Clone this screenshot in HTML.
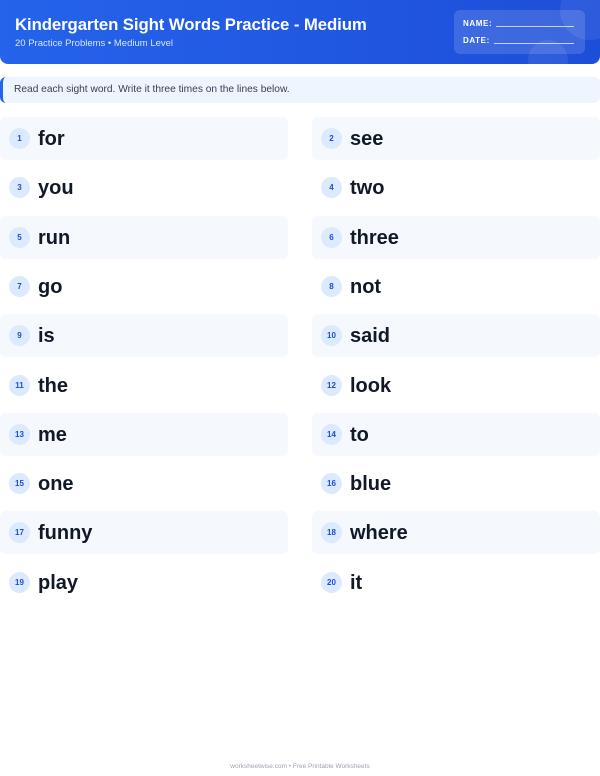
<!DOCTYPE html>
<html><head><meta charset="utf-8"><style>
*{margin:0;padding:0;box-sizing:border-box}
body{width:600px;height:776px;background:#fff;font-family:"Liberation Sans",Arial,sans-serif;position:relative;overflow:hidden}
.hdr{position:absolute;left:0;top:0;width:600px;height:64px;background:linear-gradient(90deg,#2563eb,#1d4ed8);border-radius:0 0 8px 8px;overflow:hidden;color:#fff}
.hdr h1{position:absolute;left:15px;top:15px;font-size:16.8px;font-weight:bold;letter-spacing:-0.1px}
.hdr .sub{position:absolute;left:15px;top:38px;font-size:9.5px;color:#dbe4ff}
.c1{position:absolute;right:-20px;top:-20px;width:60px;height:60px;border-radius:50%;background:rgba(255,255,255,.08)}
.c2{position:absolute;left:528px;top:40px;width:40px;height:40px;border-radius:50%;background:rgba(255,255,255,.08)}
.nb{position:absolute;left:454px;top:10px;width:131px;height:44px;background:rgba(255,255,255,.14);border-radius:6px;font-size:8px;font-weight:bold;letter-spacing:.6px}
.nb div{position:absolute;left:9px}
.nb span{display:inline-block;border-bottom:1px solid rgba(255,255,255,.7);margin-left:4px;vertical-align:-1px}
.ins{position:absolute;left:0;top:77px;width:600px;height:26px;background:#eef5ff;border-left:3px solid #2563eb;border-radius:6px;font-size:10.2px;color:#374151;padding:7px 0 0 11px}
.row{position:absolute;height:43px;border-radius:6px;width:288px}
.row.s{background:#f5f8fd}
.n{position:absolute;left:9px;top:11px;width:21px;height:21px;border-radius:50%;background:#dbeafe;color:#1d4ed8;font-size:8px;font-weight:bold;text-align:center;line-height:21px}
.w{position:absolute;left:38px;top:11px;font-size:20px;font-weight:bold;color:#111827}
.ft{position:absolute;top:763px;width:600px;text-align:center;font-size:6.5px;color:#9ca3af}
</style></head><body>
<div class="hdr"><div class="c1"></div><div class="c2"></div>
<h1>Kindergarten Sight Words Practice - Medium</h1>
<div class="sub">20 Practice Problems • Medium Level</div>
<div class="nb"><div style="top:9px">NAME:<span style="width:78px"></span></div><div style="top:26px">DATE:<span style="width:80px"></span></div></div>
</div>
<div class="ins">Read each sight word. Write it three times on the lines below.</div>
<div id="g"></div>
<script>
var w=["for","see","you","two","run","three","go","not","is","said","the","look","me","to","one","blue","funny","where","play","it"];
var h="";
for(var i=0;i<20;i++){var r=Math.floor(i/2),c=i%2;var t=117+r*49.3;
h+='<div class="row'+(r%2==0?' s':'')+'" style="top:'+t+'px;left:'+(c?312:0)+'px"><div class="n">'+(i+1)+'</div><div class="w">'+w[i]+'</div></div>';}
document.getElementById("g").innerHTML=h;
</script>
<div class="ft">worksheetwise.com • Free Printable Worksheets</div>
</body></html>
